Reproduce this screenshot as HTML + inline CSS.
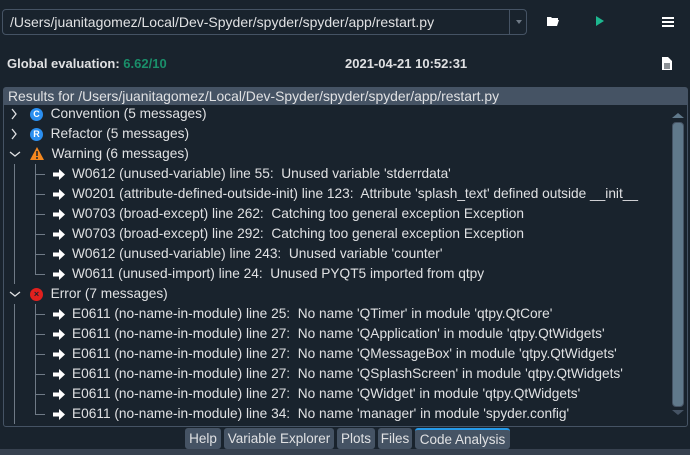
<!DOCTYPE html>
<html><head><meta charset="utf-8"><style>
*{margin:0;padding:0;box-sizing:border-box}
body{width:690px;height:455px;background:#19232d;font-family:"Liberation Sans",Helvetica,sans-serif;color:#e0e1e3;position:relative;overflow:hidden;font-size:13px}
.abs{position:absolute}
.combo{left:2px;top:9px;width:525px;height:26px;border:1px solid #455364;border-radius:4px;background:#19232d}
.combo span{position:absolute;left:7px;top:4px;font-size:14px}
.combo .sep{position:absolute;right:16px;top:0;width:1px;height:24px;background:#455364}
.panel{left:3px;top:87px;width:685px;height:340px;border:1px solid #455364;border-radius:3px}
.hdr{left:4px;top:88px;width:683px;height:17px;background:#455364;font-size:13.9px;padding-left:4px;line-height:17px}
.row{position:absolute;height:20px;line-height:20px;font-size:13.7px;white-space:pre}
.icon{display:inline-block;width:13px;height:13px;border-radius:50%;color:#fff;font-size:9px;text-align:center;line-height:13px;font-weight:bold;vertical-align:1px}
.vl{position:absolute;background:#6f7a86;width:1px}
.chev{position:absolute;left:9px;width:12px;height:20px}
.tab{position:absolute;top:428px;height:21px;background:#455364;border-radius:3px;font-size:13.5px;line-height:21px;text-align:center;color:#e0e1e3}
</style></head><body>
<div class="abs combo"><span>/Users/juanitagomez/Local/Dev-Spyder/spyder/spyder/app/restart.py</span><div class="sep"></div>
<div class="abs" style="right:4px;top:10px;width:0;height:0;border-left:3px solid transparent;border-right:3px solid transparent;border-top:4px solid #6f7a86"></div></div>
<svg class="abs" style="left:546px;top:15px" width="14" height="12"><path d="M1 2h4l1 1h6v2H4L1 11z M4 5h9l-2 6H1z" fill="#fff"/></svg>
<svg class="abs" style="left:596px;top:16px" width="8" height="10"><path d="M0 0L8 5L0 10z" fill="#1db78f"/></svg>
<svg class="abs" style="left:662px;top:17px" width="12" height="10"><path d="M0 1h12M0 5h12M0 9h12" stroke="#fff" stroke-width="2"/></svg>
<div class="abs" style="left:7px;top:56px;font-weight:bold;font-size:13px">Global evaluation: <span style="color:#1a8f6a">6.62/10</span></div>
<div class="abs" style="left:345px;top:56px;font-weight:bold;font-size:13px">2021-04-21 10:52:31</div>
<svg class="abs" style="left:662px;top:57px" width="10" height="13"><path d="M0 0h6l4 4v9H0z" fill="#fff"/><path d="M2 7h6M2 9h6M2 11h6" stroke="#19232d" stroke-width="1"/></svg>
<div class="abs panel"></div>
<div class="abs hdr">Results for /Users/juanitagomez/Local/Dev-Spyder/spyder/spyder/app/restart.py</div>
<div class="abs" style="left:672px;top:113px;width:0;height:0;border-left:6px solid transparent;border-right:6px solid transparent;border-bottom:5px solid #60798b"></div>
<div class="abs" style="left:672px;top:122px;width:12px;height:285px;background:#60798b;border-radius:4px;border:1px solid #455364"></div>
<div class="abs" style="left:672px;top:410px;width:0;height:0;border-left:6px solid transparent;border-right:6px solid transparent;border-top:5px solid #455364"></div>

<svg class="chev" style="top:104px"><path d="M3 5l4 5-4 5" stroke="#e0e1e3" stroke-width="1.3" fill="none"/></svg>
<div class="row" style="left:30px;top:104px"><span class="icon" style="background:#2b8ff0">C</span>  Convention (5 messages)</div>
<svg class="chev" style="top:124px"><path d="M3 5l4 5-4 5" stroke="#e0e1e3" stroke-width="1.3" fill="none"/></svg>
<div class="row" style="left:30px;top:124px"><span class="icon" style="background:#2b8ff0">R</span>  Refactor (5 messages)</div>
<svg class="chev" style="top:144px"><path d="M1 8l5 4 5-4" stroke="#e0e1e3" stroke-width="1.3" fill="none"/></svg>
<div class="row" style="left:30px;top:144px"><svg width="14" height="13" style="vertical-align:-2px"><path d="M7 0L14 13H0z" fill="#f5881f"/><path d="M7 4v5M7 10v2" stroke="#19232d" stroke-width="1.5"/></svg>  Warning (6 messages)</div>
<div class="vl" style="left:14px;top:164px;height:120px"></div>
<div class="vl" style="left:35px;top:164px;height:110px"></div>
<svg class="chev" style="top:284px"><path d="M1 8l5 4 5-4" stroke="#e0e1e3" stroke-width="1.3" fill="none"/></svg>
<div class="row" style="left:30px;top:284px"><span class="icon" style="background:#e0201e;color:#19232d">×</span>  Error (7 messages)</div>
<div class="vl" style="left:14px;top:304px;height:120px"></div>
<div class="vl" style="left:35px;top:304px;height:110px"></div>
<div id="items"></div>
<script>
var w=["W0612 (unused-variable) line 55:  Unused variable 'stderrdata'","W0201 (attribute-defined-outside-init) line 123:  Attribute 'splash_text' defined outside __init__","W0703 (broad-except) line 262:  Catching too general exception Exception","W0703 (broad-except) line 292:  Catching too general exception Exception","W0612 (unused-variable) line 243:  Unused variable 'counter'","W0611 (unused-import) line 24:  Unused PYQT5 imported from qtpy"];
var e=["E0611 (no-name-in-module) line 25:  No name 'QTimer' in module 'qtpy.QtCore'","E0611 (no-name-in-module) line 27:  No name 'QApplication' in module 'qtpy.QtWidgets'","E0611 (no-name-in-module) line 27:  No name 'QMessageBox' in module 'qtpy.QtWidgets'","E0611 (no-name-in-module) line 27:  No name 'QSplashScreen' in module 'qtpy.QtWidgets'","E0611 (no-name-in-module) line 27:  No name 'QWidget' in module 'qtpy.QtWidgets'","E0611 (no-name-in-module) line 34:  No name 'manager' in module 'spyder.config'"];
var h="";
function add(a,y0){a.forEach(function(t,i){var y=y0+i*20;
h+='<div class="vl" style="left:35px;top:'+(y+10)+'px;width:10px;height:1px"></div>';
h+='<svg class="abs" style="left:53px;top:'+(y+5)+'px" width="12" height="11"><path d="M0 3.5h6V0l6 5.5-6 5.5V7.5H0z" fill="#fff"/></svg>';
h+='<div class="row" style="left:72px;top:'+y+'px">'+t.replace(/</g,'&lt;')+'</div>';});}
add(w,164);add(e,304);
document.getElementById('items').innerHTML=h;
</script>
<div class="tab" style="left:185px;width:36px">Help</div>
<div class="tab" style="left:224px;width:110px">Variable Explorer</div>
<div class="tab" style="left:337px;width:38px">Plots</div>
<div class="tab" style="left:378px;width:34px">Files</div>
<div class="tab" style="left:415px;width:95px;border-top:2px solid #259ae9;line-height:19px">Code Analysis</div>
<div class="abs" style="left:0;top:449px;width:690px;height:6px;background:#37414f"></div>
</body></html>
